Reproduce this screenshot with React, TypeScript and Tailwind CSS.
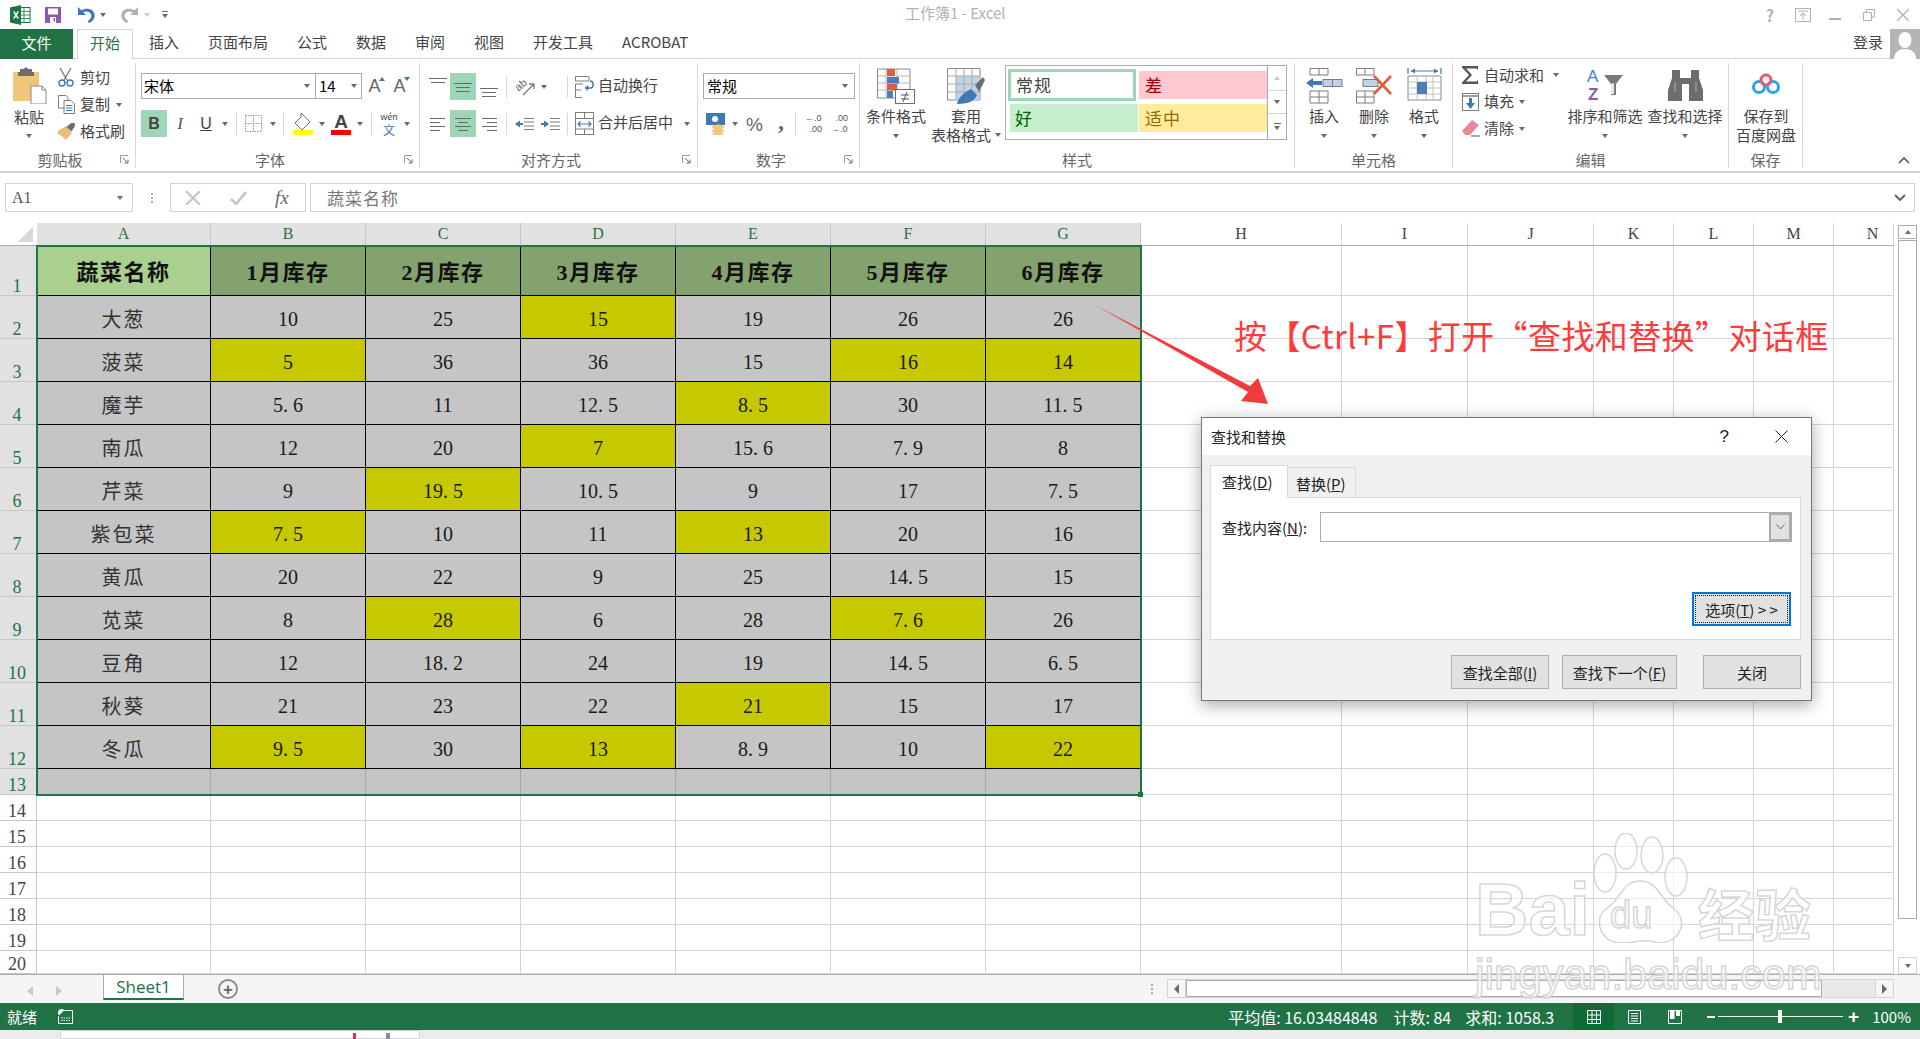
import React from 'react';

const serif = "[font-family:'Liberation_Serif','Noto_Sans_CJK_SC',serif]";

// Small helpers for the ribbon
const Caret = ({ className = '' }: { className?: string }) => (
  <span className={`inline-block shrink-0 w-0 h-0 border-x-[3.5px] border-t-[4px] border-x-transparent border-t-[#6a6a6a] ${className}`} />
);

const Sep = ({ className = '' }: { className?: string }) => (
  <span className={`inline-block shrink-0 w-px h-[22px] bg-[#d8d8d8] ${className}`} />
);

const Launcher = () => (
  <svg width="9" height="9" viewBox="0 0 9 9" className="shrink-0 mr-[6px]">
    <path d="M0.5 8V0.5H8" fill="none" stroke="#9a9a9a" />
    <path d="M3 3L7.5 7.5M8 4.5V8H4.5" fill="none" stroke="#666" />
  </svg>
);

const Group = ({ w, label, launcher, children }: { w: string; label: string; launcher?: boolean; children: React.ReactNode }) => (
  <div className={`${w} shrink-0 h-[105px] mt-[4px] flex flex-col border-r border-[#d8d8d8]`}>
    <div className="h-[87px] flex">{children}</div>
    <div className="h-[18px] flex items-center text-[15px] leading-none text-[#666]">
      <span className="flex-1 text-center">{label}</span>
      {launcher && <Launcher />}
    </div>
  </div>
);

const Large = ({ w, icon, lines, caret, className = '' }: { w: string; icon: React.ReactNode; lines: string[]; caret?: boolean; className?: string }) => (
  <div className={`${w} shrink-0 flex flex-col items-center text-[15px] text-[#444] ${className}`}>
    <div className="h-[43px] pt-[5px] flex justify-center">{icon}</div>
    {lines.map((l, i) => (
      <div key={i} className="h-[19px] leading-[19px] whitespace-nowrap flex items-center gap-[4px]">
        {l}
        {caret && lines.length > 1 && i === 1 && <Caret />}
      </div>
    ))}
    {caret && lines.length === 1 && (
      <div className="h-[21px] flex items-center">
        <Caret />
      </div>
    )}
  </div>
);

const AlignLines = ({ rows, y }: { rows: number[][]; y: number[] }) => (
  <svg width="18" height="16" viewBox="0 0 18 16">
    {rows.map((r, i) => (
      <line key={i} x1={r[0]} x2={r[1]} y1={y[i]} y2={y[i]} stroke="#6a6a6a" />
    ))}
  </svg>
);

const ExcelLogo = () => (
  <svg width="21" height="20" viewBox="0 0 21 20" className="ml-[10px]">
    <rect x="8" y="2.5" width="12" height="15" fill="#fff" stroke="#217346" />
    <path d="M8 6.5H20M8 10H20M8 13.5H20M14 2.5V17.5" stroke="#217346" strokeWidth="0.8" />
    <path d="M0 2.5L11 0V20L0 17.5Z" fill="#217346" />
    <path d="M3 6.5L5 10L3 13.5H4.8L6 11.2L7.2 13.5H9L7 10L9 6.5H7.2L6 8.8L4.8 6.5Z" fill="#fff" />
  </svg>
);

const SaveIcon = () => (
  <svg width="16" height="16" viewBox="0 0 16 16">
    <path d="M0 0H16V16H0Z" fill="#8e5aa8" />
    <rect x="3" y="1.5" width="10" height="6" fill="#fff" />
    <rect x="5" y="10" width="6" height="6" fill="#fff" />
    <rect x="8.5" y="11" width="1.6" height="3.5" fill="#8e5aa8" />
  </svg>
);

const UndoIcon = ({ color, flip }: { color: string; flip?: boolean }) => (
  <svg width="19" height="17" viewBox="0 0 19 17" className={flip ? '-scale-x-100' : ''}>
    <path d="M1 1V9H9L6.3 6.3C9 4.5 13 5.5 14 8.5C15 11.5 13 14 10.5 15L12 17C16 15.5 18.5 12 17.5 7.8C16.2 2.8 9.5 1 4.3 4.3Z" fill={color} />
  </svg>
);

const PasteIcon = () => (
  <svg width="35" height="37" viewBox="0 0 35 37">
    <path d="M1 5H27V34H1Z" fill="#eec77a" />
    <path d="M8 5V2H12C12.5 0 15.5 0 16 2H20V5H22V9H6V5Z" fill="#6d6d6d" />
    <path d="M19 19H30L34 23V37H19Z" fill="#fff" stroke="#8a8a8a" />
    <path d="M30 19V23H34" fill="none" stroke="#8a8a8a" />
  </svg>
);

const Scissors = () => (
  <svg width="16" height="19" viewBox="0 0 16 19">
    <path d="M2 0L9 12M13 0L6 12" stroke="#7d7d7d" strokeWidth="1.4" fill="none" />
    <circle cx="4" cy="15" r="3" fill="none" stroke="#3f78b5" strokeWidth="1.4" />
    <circle cx="12" cy="15" r="3" fill="none" stroke="#3f78b5" strokeWidth="1.4" />
  </svg>
);

const CopyIcon = () => (
  <svg width="17" height="19" viewBox="0 0 17 19">
    <path d="M0.5 0.5H8L10 2.5V13H0.5Z" fill="#fff" stroke="#7d7d7d" />
    <path d="M6 5.5H13L16.5 9V18.5H6Z" fill="#fff" stroke="#7d7d7d" />
    <path d="M8 10.5H14.5M8 13H14.5M8 15.5H14.5" stroke="#3f78b5" />
  </svg>
);

const Brush = () => (
  <svg width="17" height="17" viewBox="0 0 17 17">
    <path d="M0 8L8 3L14 10L8 17C5 14 2 12 0 11Z" fill="#e8bd78" />
    <path d="M8.5 4L13 0H16.5L17 3L13.5 8.5Z" fill="#6d6d6d" />
  </svg>
);

const FillIcon = () => (
  <svg width="20" height="22" viewBox="0 0 20 22">
    <path d="M8 0L10 2L17 9L9 17L2 10L8 4Z" fill="#fff" stroke="#6d6d6d" />
    <rect x="0" y="17" width="20" height="5" fill="#ffff00" />
  </svg>
);

const WrapIcon = () => (
  <svg width="20" height="22" viewBox="0 0 20 22">
    <path d="M0.5 0.5H14V5H0.5ZM0.5 8H8M0.5 8V21.5H7M0.5 14H6" fill="none" stroke="#7d7d7d" />
    <path d="M10 12H16C19 12 19 5 15 5" fill="none" stroke="#3f78b5" strokeWidth="1.5" />
    <path d="M13 9L10 12L13 15Z" fill="#3f78b5" />
  </svg>
);

const MergeIcon = () => (
  <svg width="19" height="23" viewBox="0 0 19 23">
    <rect x="0.5" y="0.5" width="18" height="22" fill="#fff" stroke="#7d7d7d" />
    <path d="M0.5 6.5H18.5M0.5 17H18.5M9.5 0.5V6.5M9.5 17V22.5" stroke="#7d7d7d" />
    <path d="M3 12H16M5.5 9.5L3 12L5.5 14.5M13.5 9.5L16 12L13.5 14.5" fill="none" stroke="#3f78b5" strokeWidth="1.2" />
  </svg>
);

const OrientIcon = () => (
  <svg width="23" height="21" viewBox="0 0 23 21" className="overflow-visible">
    <text x="2" y="13" transform="rotate(-40 7 11)" fontSize="11" fontFamily="Liberation Sans" fill="#666">ab</text>
    <path d="M9 19L20 8M20 8H15M20 8V13" fill="none" stroke="#777" strokeWidth="1.3" />
  </svg>
);

const CondFormat = () => (
  <svg width="38" height="36" viewBox="0 0 38 36">
    <path d="M0.5 1H33V30H0.5Z" fill="#fff" stroke="#8a8a8a" />
    <path d="M0.5 8H33M0.5 15H33M0.5 22H33M9 1V30M20 1V30" stroke="#b5b5b5" />
    <rect x="10" y="1" width="8" height="7" fill="#d9623b" />
    <rect x="10" y="9" width="12" height="6.5" fill="#4a7ebb" />
    <rect x="10" y="16" width="10" height="6.5" fill="#d9623b" />
    <rect x="10" y="23" width="6" height="7" fill="#4a7ebb" />
    <rect x="18.5" y="21.5" width="19" height="14" fill="#fff" stroke="#6d6d6d" />
    <path d="M24 27H32M24 31H32M30 24L26 34" stroke="#555" fill="none" />
  </svg>
);

const TableFormat = () => (
  <svg width="38" height="36" viewBox="0 0 38 36">
    <path d="M0.5 0.5H33V32H0.5Z" fill="#fff" stroke="#8a8a8a" />
    <rect x="9" y="8" width="24" height="24" fill="#bfd2e8" />
    <path d="M0.5 8H33M0.5 16H33M0.5 24H33M9 0.5V32M17 0.5V32M25 0.5V32" stroke="#a8a8a8" />
    <path d="M28 17L36 9L38 12L32 24Z" fill="#6d6d6d" />
    <path d="M10 36C11 29 18 24 24 21L30 27C28 32 23 36 10 36Z" fill="#3f78b5" />
  </svg>
);

const InsertIcon = () => (
  <svg width="37" height="36" viewBox="0 0 37 36">
    <path d="M4 0.5H22V7H4ZM13 0.5V7" fill="#fff" stroke="#7d7d7d" />
    <rect x="17" y="11.5" width="19" height="7" fill="#bfd2e8" stroke="#7d7d7d" />
    <path d="M26.5 11.5V18.5" stroke="#7d7d7d" />
    <path d="M0 15L7 10V13H16V17H7V20Z" fill="#3f78b5" />
    <path d="M4 23H22V35H4ZM13 23V35M4 29H22" fill="#fff" stroke="#7d7d7d" />
  </svg>
);

const DeleteIcon = () => (
  <svg width="36" height="36" viewBox="0 0 36 36">
    <path d="M0.5 0.5H18V7H0.5ZM9 0.5V7" fill="#fff" stroke="#7d7d7d" />
    <rect x="7" y="11.5" width="15" height="7" fill="#bfd2e8" stroke="#7d7d7d" />
    <path d="M0.5 23H18V35H0.5ZM9 23V35M0.5 29H18" fill="#fff" stroke="#7d7d7d" />
    <path d="M18 8L35 26M35 8L18 26" stroke="#d9623b" strokeWidth="2.6" />
  </svg>
);

const FormatIcon = () => (
  <svg width="35" height="36" viewBox="0 0 35 36">
    <path d="M1 0V6M34 0V6M4 3H31" stroke="#3f78b5" strokeWidth="1.2" />
    <path d="M4 3L8 0.5V5.5ZM31 3L27 0.5V5.5Z" fill="#3f78b5" />
    <path d="M1 8H34V32H1Z" fill="#fff" stroke="#8a8a8a" />
    <path d="M1 14H34M1 20H34M1 26H34M10 8V32M19 8V32M26 8V32" stroke="#c0c0c0" />
    <rect x="10" y="14" width="10" height="12" fill="#4a7ebb" />
  </svg>
);

const SortIcon = () => (
  <svg width="36" height="36" viewBox="0 0 36 36">
    <text x="0" y="14" fontSize="17" fontFamily="Liberation Sans" fill="#4a7ebb">A</text>
    <text x="1" y="32" fontSize="17" fontFamily="Liberation Sans" fontWeight="700" fill="#8e5aa8">Z</text>
    <path d="M17 7H36L29 16V27H24V16Z" fill="#7a7a7a" />
    <path d="M24 16V26H27V15Z" fill="#e8e8e8" />
  </svg>
);

const Binoculars = () => (
  <svg width="35" height="33" viewBox="0 0 35 33">
    <path d="M4 2H12V10H23V2H31V10L35 22V33H21V16H14V33H0V22L4 10Z" fill="#6d6d6d" />
    <path d="M7 14V24M28 14V24" stroke="#9a9a9a" strokeWidth="1.5" />
  </svg>
);

const BaiduDisk = () => (
  <svg width="28" height="22" viewBox="0 0 28 22">
    <circle cx="7" cy="14" r="5.5" fill="none" stroke="#2aa5e8" strokeWidth="3" />
    <circle cx="21" cy="14" r="5.5" fill="none" stroke="#2aa5e8" strokeWidth="3" />
    <circle cx="14" cy="7" r="5" fill="none" stroke="#f2546c" strokeWidth="3" />
  </svg>
);

const Sigma = () => (
  <svg width="17" height="18" viewBox="0 0 17 18">
    <path d="M0 0H16V4L14.5 2.5H4L10 9L4 15.5H14.5L16 14V18H0V16.5L7 9L0 1.5Z" fill="#555" />
  </svg>
);

const FillDown = () => (
  <svg width="17" height="18" viewBox="0 0 17 18">
    <rect x="0.5" y="0.5" width="16" height="17" fill="#fff" stroke="#7d7d7d" />
    <path d="M0.5 3H16.5" stroke="#7d7d7d" strokeWidth="1.5" />
    <path d="M7 5H10V10H13L8.5 16L4 10H7Z" fill="#3f78b5" />
  </svg>
);

const Eraser = () => (
  <svg width="18" height="17" viewBox="0 0 18 17">
    <path d="M0 11L10 0L17 5L8 15H3Z" fill="#e8899a" />
    <path d="M9 16H18" stroke="#555" />
  </svg>
);

const Avatar = () => (
  <div className="w-[30px] h-[30px] bg-[#b4b4b4] overflow-hidden">
    <svg width="30" height="30" viewBox="0 0 30 30">
      <ellipse cx="15" cy="11" rx="6.5" ry="8" fill="#fff" />
      <path d="M4 30C4 23 9 20 15 20C21 20 26 23 26 30Z" fill="#fff" />
    </svg>
  </div>
);

const TitleBar = () => (
  <div className="h-[29px] flex items-center text-[#b1b1b1] relative">
    <ExcelLogo />
    <span className="ml-[14px]"><SaveIcon /></span>
    <span className="ml-[16px]"><UndoIcon color="#3f78b5" /></span>
    <Caret className="ml-[4px]" />
    <span className="ml-[14px]"><UndoIcon color="#b1b1b1" flip /></span>
    <Caret className="ml-[5px] border-t-[#c8c8c8]" />
    <span className="ml-[12px] flex flex-col items-center gap-[2px]">
      <span className="w-[6px] h-px bg-[#777]" />
      <Caret />
    </span>
    <div className="absolute left-[905px] top-[3px] text-[15px] leading-[19px] whitespace-nowrap">工作簿1 - Excel</div>
    <div className="ml-auto flex items-center text-[#b1b1b1]">
      <span className="text-[16px] font-bold leading-none">?</span>
      <svg width="16" height="14" viewBox="0 0 16 14" className="ml-[21px]">
        <rect x="0.5" y="0.5" width="15" height="13" fill="none" stroke="#b1b1b1" />
        <path d="M3 3H13M8 12V5M5 8L8 5L11 8" fill="none" stroke="#b1b1b1" />
      </svg>
      <span className="ml-[18px] w-[12px] h-[2px] mt-[8px] bg-[#b1b1b1]" />
      <svg width="12" height="12" viewBox="0 0 12 12" className="ml-[22px]">
        <path d="M3.5 3V0.5H11.5V8H8.5M0.5 3.5H8.5V11.5H0.5Z" fill="none" stroke="#b1b1b1" />
      </svg>
      <svg width="12" height="12" viewBox="0 0 12 12" className="ml-[22px] mr-[11px]">
        <path d="M0 0L12 12M12 0L0 12" stroke="#b1b1b1" strokeWidth="1.4" />
      </svg>
    </div>
  </div>
);

const TabRow = () => (
  <div className="h-[30px] flex border-b border-[#d4d4d4] text-[15px] text-[#444]">
    <div className="w-[73px] h-[30px] bg-[#217346] text-white flex items-center justify-center pb-[2px]">文件</div>
    <div className="ml-[4px] w-[56px] h-[30px] bg-white border border-b-0 border-[#d4d4d4] text-[#217346] flex items-center justify-center pb-[2px]">开始</div>
    <div className="ml-[16px] flex items-center gap-[29px] h-[29px] pb-[2px]">
      <span>插入</span>
      <span>页面布局</span>
      <span>公式</span>
      <span>数据</span>
      <span>审阅</span>
      <span>视图</span>
      <span>开发工具</span>
      <span>ACROBAT</span>
    </div>
    <div className="ml-auto flex items-center h-[29px] gap-[7px]">
      <span className="pb-[2px]">登录</span>
      <Avatar />
    </div>
  </div>
);

const Clipboard = () => (
  <Group w="w-[136px]" label="剪贴板" launcher>
    <div className="w-[58px] shrink-0 flex flex-col items-center text-[15px] text-[#444]">
      <div className="h-[44px] pt-[4px]"><PasteIcon /></div>
      <div className="h-[19px] leading-[19px]">粘贴</div>
      <div className="h-[19px] flex items-center"><Caret /></div>
    </div>
    <div className="flex flex-col text-[15px] text-[#444] pt-px">
      <div className="h-[27px] flex items-center">
        <span className="w-[22px] flex justify-start"><Scissors /></span>
        剪切
      </div>
      <div className="h-[27px] flex items-center">
        <span className="w-[22px] flex justify-start"><CopyIcon /></span>
        复制
        <Caret className="ml-[6px]" />
      </div>
      <div className="h-[27px] flex items-center">
        <span className="w-[22px] flex justify-start"><Brush /></span>
        格式刷
      </div>
    </div>
  </Group>
);

const GrowFont = ({ up }: { up: boolean }) => (
  <span className="w-[25px] flex items-start justify-center text-[#666] [font-family:'Liberation_Sans',sans-serif]">
    <span className="text-[18px] leading-[20px]">A</span>
    <span className={`-ml-[2px] mt-[1px] w-0 h-0 border-x-[3px] border-x-transparent ${up ? 'border-b-[4px] border-b-[#3f78b5]' : 'border-t-[4px] border-t-[#3f78b5]'}`} />
  </span>
);

const FontGroup = () => (
  <Group w="w-[284px]" label="字体" launcher>
    <div className="pl-[5px] pt-[10px] flex flex-col gap-[11px]">
      <div className="flex items-center h-[26px]">
        <div className="w-[175px] h-[26px] border border-[#ababab] flex items-center justify-between px-[2px] text-[15px] text-black">
          宋体
          <Caret className="mr-[3px]" />
        </div>
        <div className="w-[46px] h-[26px] border border-l-0 border-[#ababab] flex items-center justify-between pl-[3px] pr-[4px] text-[15px] text-black">
          14
          <Caret />
        </div>
        <span className="ml-[2px]"><GrowFont up /></span>
        <GrowFont up={false} />
      </div>
      <div className="flex items-center h-[27px]">
        <span className="w-[26px] h-[27px] bg-[#9fd5b7] flex items-center justify-center text-[16px] font-bold text-[#444] [font-family:'Liberation_Sans',sans-serif]">B</span>
        <span className={`w-[26px] text-center text-[17px] italic text-[#555] ${serif}`}>I</span>
        <span className="w-[26px] text-center text-[16px] text-[#444] underline [font-family:'Liberation_Sans',sans-serif]">U</span>
        <Caret className="ml-[3px]" />
        <Sep className="ml-[8px]" />
        <svg width="17" height="17" viewBox="0 0 17 17" className="ml-[8px]">
          <path d="M0.5 0.5H16.5V16.5H0.5ZM8.5 0.5V16.5M0.5 8.5H16.5" fill="none" stroke="#999" strokeDasharray="1.5 1" />
        </svg>
        <Caret className="ml-[8px]" />
        <Sep className="ml-[7px]" />
        <span className="ml-[9px]"><FillIcon /></span>
        <Caret className="ml-[6px]" />
        <span className="ml-[6px] w-[20px] flex flex-col items-center leading-none text-[#444]">
          <span className="text-[19px] leading-[17px] font-bold [font-family:'Liberation_Sans',sans-serif]">A</span>
          <span className="w-[20px] h-[5px] bg-[#ff0000]" />
        </span>
        <Caret className="ml-[6px]" />
        <Sep className="ml-[8px]" />
        <span className="ml-[8px] w-[18px] flex flex-col items-center gap-[2px]">
          <span className="text-[9px] leading-[9px] text-[#444]">wén</span>
          <span className="text-[12px] leading-[13px] text-[#3f78b5]">文</span>
        </span>
        <Caret className="ml-[6px]" />
      </div>
    </div>
  </Group>
);

const AlignGroup = () => (
  <Group w="w-[278px]" label="对齐方式" launcher>
    <div className="pl-[5px] pt-[10px] flex flex-col gap-[10px]">
      <div className="flex items-center h-[27px]">
        <span className="w-[25px] h-[27px] flex items-start justify-center pt-[2px]"><AlignLines rows={[[0, 18], [2, 16]]} y={[3.5, 7.5]} /></span>
        <span className="w-[26px] h-[27px] bg-[#9fd5b7] flex items-center justify-center"><AlignLines rows={[[0, 18], [2, 16], [2, 16]]} y={[4.5, 8.5, 12.5]} /></span>
        <span className="w-[26px] h-[27px] flex items-end justify-center pb-[2px]"><AlignLines rows={[[0, 18], [2, 16], [2, 16]]} y={[6.5, 10.5, 14.5]} /></span>
        <Sep className="ml-[4px]" />
        <span className="ml-[7px]"><OrientIcon /></span>
        <Caret className="ml-[4px]" />
        <Sep className="ml-[20px]" />
        <span className="ml-[7px]"><WrapIcon /></span>
        <span className="ml-[3px] -mt-[2px] text-[15px] text-[#444] whitespace-nowrap">自动换行</span>
      </div>
      <div className="flex items-center h-[27px]">
        <span className="w-[25px] flex justify-center"><AlignLines rows={[[1, 16], [1, 11], [1, 16], [1, 11]]} y={[2.5, 6.5, 10.5, 14.5]} /></span>
        <span className="w-[26px] h-[27px] bg-[#9fd5b7] flex items-center justify-center"><AlignLines rows={[[1, 17], [4, 14], [1, 17], [4, 14]]} y={[2.5, 6.5, 10.5, 14.5]} /></span>
        <span className="w-[26px] flex justify-center"><AlignLines rows={[[2, 17], [7, 17], [2, 17], [7, 17]]} y={[2.5, 6.5, 10.5, 14.5]} /></span>
        <Sep className="ml-[4px]" />
        <svg width="19" height="14" viewBox="0 0 19 14" className="ml-[8px]">
          <path d="M9 1.5H19M9 5H19M9 9H19M9 12.5H19" stroke="#7d7d7d" />
          <path d="M0 7L5 3.5V6H8V8H5V10.5Z" fill="#3f78b5" />
        </svg>
        <svg width="19" height="14" viewBox="0 0 19 14" className="ml-[7px]">
          <path d="M9 1.5H19M9 5H19M9 9H19M9 12.5H19" stroke="#7d7d7d" />
          <path d="M8 7L3 3.5V6H0V8H3V10.5Z" fill="#3f78b5" />
        </svg>
        <Sep className="ml-[7px]" />
        <span className="ml-[7px]"><MergeIcon /></span>
        <span className="ml-[4px] -mt-[2px] text-[15px] text-[#444] whitespace-nowrap">合并后居中</span>
        <Caret className="ml-[11px]" />
      </div>
    </div>
  </Group>
);

const NumberGroup = () => (
  <Group w="w-[162px]" label="数字" launcher>
    <div className="pl-[5px] pt-[10px] flex flex-col gap-[12px]">
      <div className="w-[152px] h-[26px] border border-[#ababab] flex items-center justify-between px-[3px] text-[15px] text-black">
        常规
        <Caret className="mr-[3px]" />
      </div>
      <div className="flex items-center h-[26px]">
        <svg width="19" height="22" viewBox="0 0 19 22" className="ml-[3px]">
          <rect x="0" y="0" width="19" height="12" fill="#3f78b5" />
          <circle cx="9" cy="6" r="3" fill="#fff" />
          <ellipse cx="12" cy="14" rx="6" ry="2.5" fill="#eec77a" />
          <ellipse cx="12" cy="18" rx="6" ry="2.5" fill="#eec77a" />
          <ellipse cx="12" cy="21" rx="6" ry="1" fill="#eec77a" />
        </svg>
        <Caret className="ml-[7px]" />
        <span className="ml-[8px] text-[19px] leading-none text-[#666] [font-family:'Liberation_Sans',sans-serif]">%</span>
        <span className={`ml-[15px] text-[24px] leading-none font-bold text-[#666] -mt-[6px] ${serif}`}>,</span>
        <Sep className="ml-[11px]" />
        <span className="ml-[9px] w-[17px] flex flex-col text-[9px] leading-[11px] text-[#555] [font-family:'Liberation_Sans',sans-serif]">
          <span><span className="text-[#3f78b5]">←</span>.0</span>
          <span className="text-right">.00</span>
        </span>
        <span className="ml-[9px] w-[17px] flex flex-col text-[9px] leading-[11px] text-[#555] [font-family:'Liberation_Sans',sans-serif]">
          <span className="text-right">.00</span>
          <span><span className="text-[#3f78b5]">→</span>.0</span>
        </span>
      </div>
    </div>
  </Group>
);

const StyleCell = ({ label, className }: { label: string; className: string }) => (
  <div className={`flex items-center pl-[5px] pb-[2px] text-[17px] leading-none tracking-[1px] ${className}`}>{label}</div>
);

const StylesGroup = () => (
  <Group w="w-[435px]" label="样式">
    <Large w="w-[72px]" icon={<CondFormat />} lines={['条件格式']} caret />
    <Large w="w-[66px]" icon={<TableFormat />} lines={['套用', '表格格式']} caret className="ml-[1px]" />
    <div className="ml-[6px] mt-[2px] w-[282px] h-[75px] border border-[#ababab] flex">
      <div className="w-[261px] pt-[3px] pl-[2px] grid grid-cols-[128px_128px] grid-rows-[32px_28px] gap-x-[3px] gap-y-[3px]">
        <StyleCell label="常规" className="border-[3px] border-[#9fd5b7] bg-white text-[#444] pl-[4px]" />
        <StyleCell label="差" className="bg-[#ffc7ce] text-[#9c0006] my-[2px] pl-[6px]" />
        <StyleCell label="好" className="bg-[#c6efce] text-[#006100] ml-[2px] -mr-[2px]" />
        <StyleCell label="适中" className="bg-[#ffeb9c] text-[#9c6500] pl-[6px]" />
      </div>
      <div className="flex-1 border-l border-[#ababab] flex flex-col">
        <div className="h-[25px] border-b border-[#d4d4d4] flex items-center justify-center"><Caret className="rotate-180 border-t-[#c8c8c8]" /></div>
        <div className="h-[23px] border-b border-[#d4d4d4] flex items-center justify-center"><Caret /></div>
        <div className="flex-1 flex flex-col items-center justify-center gap-[2px]">
          <span className="w-[7px] h-px bg-[#666]" />
          <Caret />
        </div>
      </div>
    </div>
  </Group>
);

const CellsGroup = () => (
  <Group w="w-[158px]" label="单元格">
    <Large w="w-[50px]" icon={<InsertIcon />} lines={['插入']} caret className="ml-[4px]" />
    <Large w="w-[50px]" icon={<DeleteIcon />} lines={['删除']} caret />
    <Large w="w-[50px]" icon={<FormatIcon />} lines={['格式']} caret />
  </Group>
);

const EditGroup = () => (
  <Group w="w-[276px]" label="编辑">
    <div className="pl-[9px] w-[112px] shrink-0 flex flex-col text-[15px] text-[#444] -mt-px">
      <div className="h-[26px] flex items-center">
        <span className="w-[22px]"><Sigma /></span>
        自动求和
        <Caret className="ml-[9px]" />
      </div>
      <div className="h-[27px] flex items-center">
        <span className="w-[22px]"><FillDown /></span>
        填充
        <Caret className="ml-[5px]" />
      </div>
      <div className="h-[27px] flex items-center">
        <span className="w-[22px]"><Eraser /></span>
        清除
        <Caret className="ml-[5px]" />
      </div>
    </div>
    <Large w="w-[80px]" icon={<SortIcon />} lines={['排序和筛选']} caret />
    <Large w="w-[80px]" icon={<Binoculars />} lines={['查找和选择']} caret />
  </Group>
);

const SaveGroup = () => (
  <Group w="w-[74px]" label="保存">
    <Large w="w-[74px]" icon={<span className="block pt-[5px]"><BaiduDisk /></span>} lines={['保存到', '百度网盘']} />
  </Group>
);

const Ribbon = () => (
  <div className="h-[114px] flex border-b-2 border-[#d4d4d4] relative">
    <Clipboard />
    <FontGroup />
    <AlignGroup />
    <NumberGroup />
    <StylesGroup />
    <CellsGroup />
    <EditGroup />
    <SaveGroup />
    <svg width="12" height="7" viewBox="0 0 12 7" className="ml-auto mr-[10px] mt-[98px]">
      <path d="M1 6L6 1L11 6" fill="none" stroke="#555" strokeWidth="1.6" />
    </svg>
  </div>
);

const FormulaBar = () => (
  <div className="h-[50px] pt-[10px] flex pl-[5px] pr-[5px]">
    <div className="w-[128px] h-[29px] border border-[#d4d4d4] flex items-center justify-between pl-[6px] pr-[9px]">
      <span className={`text-[16px] text-[#555] ${serif}`}>A1</span>
      <Caret />
    </div>
    <div className="w-[37px] h-[29px] flex flex-col items-center justify-center gap-[2px]">
      <span className="w-[2px] h-[2px] bg-[#aaa]" />
      <span className="w-[2px] h-[2px] bg-[#aaa]" />
      <span className="w-[2px] h-[2px] bg-[#aaa]" />
    </div>
    <div className="w-[136px] h-[29px] border border-[#d4d4d4] flex items-center pl-[14px]">
      <svg width="16" height="14" viewBox="0 0 16 14"><path d="M1 0L15 14M15 0L1 14" stroke="#c4c4c4" strokeWidth="2" /></svg>
      <svg width="17" height="14" viewBox="0 0 17 14" className="ml-[29px]"><path d="M1 8L6 13L16 1" fill="none" stroke="#c4c4c4" strokeWidth="2.6" /></svg>
      <span className={`ml-[28px] text-[19px] leading-none italic text-[#666] ${serif}`}>fx</span>
    </div>
    <div className="ml-[4px] flex-1 h-[29px] border border-[#d4d4d4] flex items-center pl-[16px] pr-[8px]">
      <span className="text-[17px] leading-none tracking-[1px] text-[#777]">蔬菜名称</span>
      <svg width="12" height="7" viewBox="0 0 12 7" className="ml-auto">
        <path d="M1 1L6 6L11 1" fill="none" stroke="#666" strokeWidth="2" />
      </svg>
    </div>
  </div>
);

const columns = ['A', 'B', 'C', 'D', 'E', 'F', 'G', 'H', 'I', 'J', 'K', 'L', 'M', 'N'];
const header = ['蔬菜名称', '1月库存', '2月库存', '3月库存', '4月库存', '5月库存', '6月库存'];

// a * marks a cell that is filled yellow
const rows = [
  ['大葱', '10', '25', '15*', '19', '26', '26'],
  ['菠菜', '5*', '36', '36', '15', '16*', '14*'],
  ['魔芋', '5. 6', '11', '12. 5', '8. 5*', '30', '11. 5'],
  ['南瓜', '12', '20', '7*', '15. 6', '7. 9', '8'],
  ['芹菜', '9', '19. 5*', '10. 5', '9', '17', '7. 5'],
  ['紫包菜', '7. 5*', '10', '11', '13*', '20', '16'],
  ['黄瓜', '20', '22', '9', '25', '14. 5', '15'],
  ['苋菜', '8', '28*', '6', '28', '7. 6*', '26'],
  ['豆角', '12', '18. 2', '24', '19', '14. 5', '6. 5'],
  ['秋葵', '21', '23', '22', '21*', '15', '17'],
  ['冬瓜', '9. 5*', '30', '13*', '8. 9', '10', '22*'],
];

const RowHead = ({ n, selected }: { n: number; selected: boolean }) => (
  <div className={`flex items-end justify-center pr-[2px] border-b border-[#c6c6c6] border-r text-[18px] leading-[18px] overflow-hidden ${serif} ${selected ? 'bg-[#e1e1e1] text-[#217346]' : 'bg-white text-[#444]'}`}>
    {n}
  </div>
);

const Sheet = () => (
  <div className="grid grid-cols-[37px_174px_155px_155px_155px_155px_155px_155px_201px_126px_126px_80px_80px_80px_60px] grid-rows-[23px_50px_repeat(11,43px)_26px_repeat(6,26px)_23px] w-[1894px] h-[751px] relative">
    <div className="bg-white border-b border-[#ababab] flex items-end justify-end pr-[4px] pb-[3px]">
      <div className="w-[15px] h-[15px] bg-[linear-gradient(135deg,transparent_50%,#d8d8d8_50%)]" />
    </div>
    {columns.map((c, i) => (
      <div key={c} className={`flex items-center justify-center text-[16px] border-r border-b ${c === 'N' ? 'pl-[18px]' : ''} ${serif} ${i < 7 ? 'bg-[#e1e1e1] text-[#217346] border-[#c6c6c6]' : 'bg-white text-[#444] border-r-[#d4d4d4] border-b-[#ababab]'}`}>
        {c}
      </div>
    ))}

    <RowHead n={1} selected />
    {header.map((h, i) => (
      <div key={h} className={`flex items-center justify-center pt-[4px] border-r border-b border-black text-[22px] font-bold tracking-[1.5px] text-[#111] ${serif} ${i === 0 ? 'bg-[#a9d08e]' : 'bg-[#84a26e]'}`}>
        {h}
      </div>
    ))}
    {columns.slice(7).map((c) => (
      <div key={c} className="border-r border-b border-[#d4d4d4]" />
    ))}

    {rows.map((r, i) => (
      <React.Fragment key={r[0]}>
        <RowHead n={i + 2} selected />
        {r.map((v, j) => {
          const hot = v.endsWith('*');
          return (
            <div key={j} className={`flex items-center justify-center border-r border-b border-black text-[20px] ${serif} ${j === 0 ? 'pt-[5px] tracking-[2px] text-[#333]' : 'pt-[4px] text-[#1a1a1a]'} ${hot ? 'bg-[#c6c800]' : 'bg-[#c5c5c5]'}`}>
              {hot ? v.slice(0, -1) : v}
            </div>
          );
        })}
        {columns.slice(7).map((c) => (
          <div key={c} className="border-r border-b border-[#d4d4d4]" />
        ))}
      </React.Fragment>
    ))}

    <RowHead n={13} selected />
    {header.map((h) => (
      <div key={h} className="bg-[#c5c5c5] border-r border-[#a8a8a8]" />
    ))}
    {columns.slice(7).map((c) => (
      <div key={c} className="border-r border-b border-[#d4d4d4]" />
    ))}

    {[14, 15, 16, 17, 18, 19, 20].map((n) => (
      <React.Fragment key={n}>
        <RowHead n={n} selected={false} />
        {columns.map((c) => (
          <div key={c} className="border-r border-b border-[#d4d4d4]" />
        ))}
      </React.Fragment>
    ))}

    {/* selection frame over A1:G13 */}
    <div className="absolute left-[36px] top-[22px] w-[1106px] h-[551px] border-2 border-[#217346] pointer-events-none">
      <span className="absolute -right-[3px] -bottom-[3px] w-[5px] h-[5px] bg-[#217346]" />
    </div>
  </div>
);

const VScroll = () => (
  <div className="w-[26px] pl-[4px] pt-[2px] flex flex-col bg-white">
    <div className="w-[19px] h-[14px] border border-[#ababab] flex items-center justify-center">
      <Caret className="rotate-180" />
    </div>
    <div className="w-[19px] h-[679px] mt-[1px] border border-[#ababab] bg-white" />
    <div className="flex-1" />
    <div className="w-[19px] h-[17px] border border-[#d4d4d4] flex items-center justify-center">
      <Caret />
    </div>
  </div>
);

const SheetBar = () => (
  <div className="h-[29px] bg-[#f5f5f5] border-t border-[#ababab] flex">
    <svg width="6" height="10" viewBox="0 0 6 10" className="ml-[27px] mt-[11px]"><path d="M6 0V10L0 5Z" fill="#c8c8c8" /></svg>
    <svg width="6" height="10" viewBox="0 0 6 10" className="ml-[23px] mt-[11px]"><path d="M0 0V10L6 5Z" fill="#c8c8c8" /></svg>
    <div className="ml-[41px] w-[81px] h-[25px] bg-white border-x border-[#ababab] border-b-2 border-b-[#217346] flex items-center justify-center text-[#217346] text-[17px] leading-none [font-family:'Open_Sans',sans-serif]">Sheet1</div>
    <div className="ml-[34px] mt-[4px] w-[20px] h-[20px] rounded-full border-2 border-[#8a8a8a] flex items-center justify-center text-[#6a6a6a] text-[17px] leading-none font-bold [font-family:'Liberation_Sans',sans-serif]">+</div>
    <div className="ml-auto mr-[26px] flex items-center h-full pb-[1px]">
      <div className="flex flex-col gap-[2px] mr-[14px]">
        <span className="w-[2px] h-[2px] bg-[#aaa]" />
        <span className="w-[2px] h-[2px] bg-[#aaa]" />
        <span className="w-[2px] h-[2px] bg-[#aaa]" />
      </div>
      <div className="w-[727px] h-[19px] border border-[#d4d4d4] flex items-stretch bg-[#e9e9e9]">
        <span className="w-[18px] bg-[#f5f5f5] border-r border-[#d4d4d4] flex items-center justify-center">
          <span className="w-0 h-0 border-y-[5px] border-r-[5px] border-y-transparent border-r-[#6a6a6a]" />
        </span>
        <span className="w-[636px] bg-white border border-[#ababab]" />
        <span className="flex-1" />
        <span className="w-[18px] bg-[#f5f5f5] border-l border-[#d4d4d4] flex items-center justify-center">
          <span className="w-0 h-0 border-y-[5px] border-l-[5px] border-y-transparent border-l-[#6a6a6a]" />
        </span>
      </div>
    </div>
  </div>
);

const StatusBar = () => (
  <div className="h-[27px] bg-[#217346] text-white flex items-center text-[15px] leading-none">
    <span className="ml-[7px]">就绪</span>
    <svg width="15" height="15" viewBox="0 0 15 15" className="ml-[21px]">
      <circle cx="3.5" cy="3.5" r="3.5" fill="#fff" />
      <path d="M6 1.5H14.5V14.5H0.5V7" fill="#217346" stroke="#fff" />
      <path d="M3 9H12M3 11.5H12" stroke="#fff" strokeDasharray="1.5 1" />
    </svg>
    <span className="ml-auto whitespace-nowrap text-[16px]">平均值: 16.03484848</span>
    <span className="ml-[16px] whitespace-nowrap text-[16px]">计数: 84</span>
    <span className="ml-[14px] whitespace-nowrap text-[16px]">求和: 1058.3</span>
    <span className="ml-[19px] w-[41px] h-[27px] bg-[#0f6a37] flex items-center justify-center">
      <svg width="14" height="14" viewBox="0 0 14 14"><path d="M0.5 0.5H13.5V13.5H0.5ZM0.5 5H13.5M0.5 9.5H13.5M5 0.5V13.5M9.5 0.5V13.5" fill="none" stroke="#fff" /></svg>
    </span>
    <span className="ml-[14px]">
      <svg width="13" height="14" viewBox="0 0 13 14" className="block"><path d="M0.5 0.5H12.5V13.5H0.5ZM3 3.5H10M3 6H10M3 8.5H10M3 11H10" fill="none" stroke="#fff" /></svg>
    </span>
    <span className="ml-[27px]">
      <svg width="14" height="14" viewBox="0 0 14 14" className="block"><path d="M0.5 0.5H13.5V13.5H0.5Z" fill="none" stroke="#fff" /><path d="M2 1H6.5V9H2ZM8 1H12V6H8Z" fill="#fff" /></svg>
    </span>
    <span className="ml-[25px] w-[8px] h-[2px] bg-white" />
    <span className="ml-[3px] w-[125px] h-px bg-white relative">
      <span className="absolute left-[60px] -top-[6px] w-[4px] h-[13px] bg-white" />
    </span>
    <span className="ml-[5px] text-[19px] font-bold leading-none [font-family:'Liberation_Sans',sans-serif]">+</span>
    <span className="ml-[13px] mr-[9px]">100%</span>
  </div>
);

const BottomStrip = () => (
  <div className="h-[9px] bg-[#ececec] flex overflow-hidden">
    <div className="ml-[60px] w-[360px] h-[9px] bg-white border border-[#d4d4d4] relative">
      <span className="absolute left-[292px] top-[2px] w-[3px] h-[8px] bg-[#d8315b]" />
      <span className="absolute left-[325px] top-[2px] w-[4px] h-[8px] bg-[#7d8fa3]" />
    </div>
  </div>
);

const DlgButton = ({ className, children }: { className: string; children: React.ReactNode }) => (
  <div className={`h-[34px] bg-[#e1e1e1] border border-[#adadad] flex items-center justify-center text-[15px] leading-none text-[#222] ${className}`}>
    {children}
  </div>
);

const FindDialog = () => (
  <div className="absolute left-[1201px] top-[417px] w-[611px] h-[284px] border border-[#777] bg-[#f0f0f0] shadow-[0_4px_16px_rgba(0,0,0,0.35)] flex flex-col text-[15px] leading-none text-[#222]">
    <div className="h-[37px] bg-white flex items-center pl-[9px] pr-[23px]">
      <span>查找和替换</span>
      <span className="ml-auto text-[17px] [font-family:'Liberation_Sans',sans-serif]">?</span>
      <svg width="13" height="13" viewBox="0 0 13 13" className="ml-[46px]"><path d="M0.5 0.5L12.5 12.5M12.5 0.5L0.5 12.5" stroke="#222" /></svg>
    </div>
    <div className="pl-[8px] pr-[10px] pt-[10px] flex-1 flex flex-col">
      <div className="flex items-end h-[33px] relative z-10">
        <div className="w-[78px] h-[33px] bg-white border border-b-0 border-[#d9d9d9] pl-[11px] pt-[8px]">查找(<span className="underline">D</span>)</div>
        <div className="w-[68px] h-[31px] bg-[#f0f0f0] border border-l-0 border-[#d9d9d9] pl-[8px] pt-[8px]">替换(<span className="underline">P</span>)</div>
      </div>
      <div className="h-[143px] -mt-px bg-white border border-[#d9d9d9] pl-[11px] pr-[8px] pt-[14px]">
        <div className="flex items-center h-[30px]">
          <span className="w-[98px] whitespace-nowrap">查找内容(<span className="underline">N</span>):</span>
          <div className="w-[472px] h-[30px] border border-[#ababab] flex justify-end bg-white">
            <span className="w-[22px] h-full bg-[#e1e1e1] border-2 border-[#ababab] flex items-center justify-center">
              <svg width="9" height="6" viewBox="0 0 9 6"><path d="M0.5 0.5L4.5 5L8.5 0.5" fill="none" stroke="#666" /></svg>
            </span>
          </div>
        </div>
        <div className="flex justify-end mt-[50px] pr-px">
          <div className="w-[99px] h-[34px] border-2 border-[#0078d7] bg-[#e1e1e1] p-[1px]">
            <div className="w-full h-full border border-dotted border-[#222] flex items-center justify-center whitespace-nowrap">
              选项(<span className="underline">T</span>) &gt; &gt;
            </div>
          </div>
        </div>
      </div>
      <div className="flex mt-[15px]">
        <DlgButton className="ml-[241px] w-[99px]"><span>查找全部(<span className="underline">I</span>)</span></DlgButton>
        <DlgButton className="ml-[13px] w-[116px]"><span>查找下一个(<span className="underline">F</span>)</span></DlgButton>
        <DlgButton className="ml-[26px] w-[99px]">关闭</DlgButton>
      </div>
    </div>
  </div>
);

const Annotation = () => (
  <>
    <div className="absolute left-[1234px] top-[314px] text-[33px] leading-[42px] tracking-[0.4px] whitespace-nowrap text-[#ff3b3b]">
      按【Ctrl+F】打开“查找和替换”对话框
    </div>
    <svg className="absolute left-[1090px] top-[300px] pointer-events-none" width="190" height="110" viewBox="1090 300 190 110">
      <path d="M1095 305L1250 386L1258 378L1268 404L1241 401L1248 392Z" fill="#f23c3c" />
    </svg>
  </>
);

const outline = "[-webkit-text-stroke:1.5px_#d6d6d6] text-white/60 [font-family:'Liberation_Sans',sans-serif]";

const Watermark = () => (
  <div className="absolute left-[1475px] top-[833px] w-[345px] h-[166px] pointer-events-none">
    <div className="flex items-end h-[110px]">
      <span className={`w-[117px] text-[74px] leading-[66px] font-bold ${outline}`}>Bai</span>
      <div className="relative w-[104px] h-[110px] shrink-0">
        <svg width="104" height="110" viewBox="0 0 104 110">
          <g fill="rgba(255,255,255,0.6)" stroke="#d6d6d6" strokeWidth="1.5">
            <ellipse cx="13" cy="40" rx="11" ry="19" />
            <ellipse cx="34" cy="18" rx="11" ry="18" />
            <ellipse cx="60" cy="22" rx="11" ry="18" />
            <ellipse cx="84" cy="44" rx="11" ry="19" />
            <path d="M48 48C30 48 28 68 14 76C2 84 6 110 30 110C44 110 52 105 66 110C90 110 96 86 82 76C68 66 66 48 48 48Z" />
          </g>
        </svg>
        <span className={`absolute left-[18px] top-[60px] text-[38px] leading-[44px] ${outline}`}>du</span>
      </div>
      <span className="ml-[2px] text-[56px] leading-[62px] font-bold tracking-[1px] [-webkit-text-stroke:1.5px_#d6d6d6] text-white/60">经验</span>
    </div>
    <div className={`mt-[6px] text-[43px] leading-[50px] whitespace-nowrap ${outline}`}>jingyan.baidu.com</div>
  </div>
);

export default function App() {
  return (
    <div className="relative w-[1920px] h-[1039px] overflow-hidden bg-white [font-family:'Noto_Sans_CJK_SC','Liberation_Sans',sans-serif]">
      <TitleBar />
      <TabRow />
      <Ribbon />
      <FormulaBar />
      <div className="flex h-[751px]">
        <Sheet />
        <VScroll />
      </div>
      <SheetBar />
      <StatusBar />
      <BottomStrip />
      <Annotation />
      <FindDialog />
      <Watermark />
    </div>
  );
}
